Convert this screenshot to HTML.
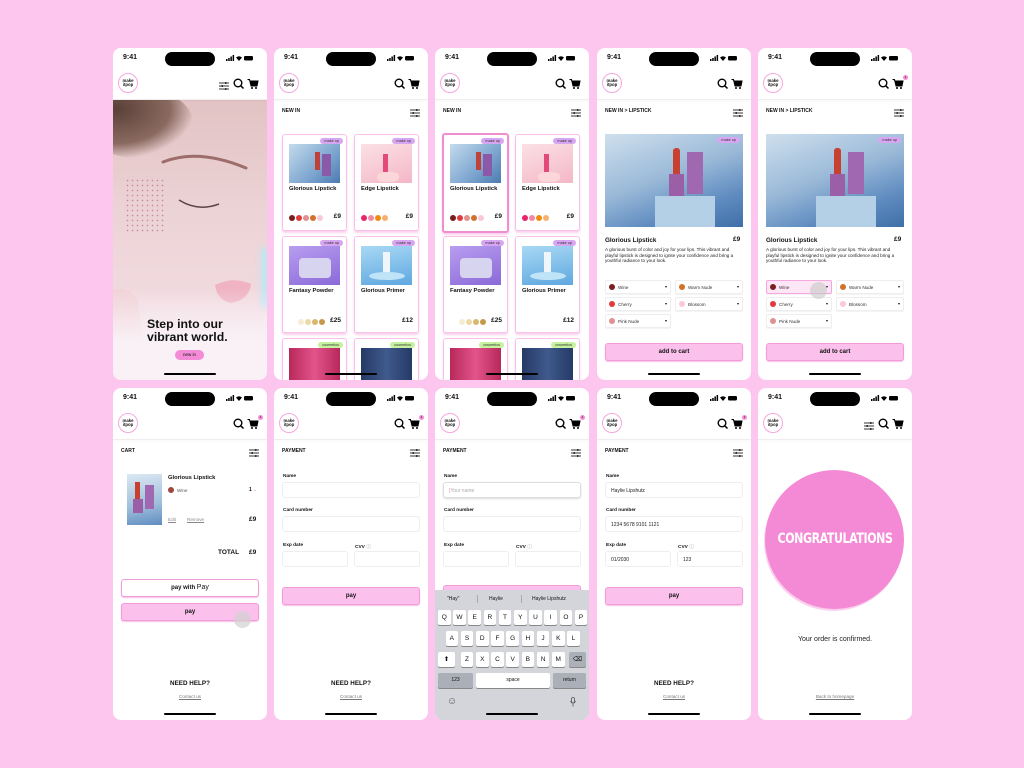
<!DOCTYPE html>
<html><head><meta charset="utf-8"><style>
body{margin:0;width:1024px;height:768px;background:#fdc6ee;position:relative;overflow:hidden;font-family:"Liberation Sans",sans-serif;color:#111}
.ph{position:absolute;width:154px;height:332px;background:#fff;border-radius:8px;overflow:hidden}
.t{position:absolute;white-space:nowrap}
.di{position:absolute;left:52px;top:4px;width:50px;height:14px;background:#000;border-radius:7px}
.tm{position:absolute;left:10px;top:6px;font-size:7px;font-weight:bold}
.sig{position:absolute;left:113px;top:7px}
.logo{position:absolute;left:5px;top:25px;width:20px;height:20px;border:1px solid #f6a7de;border-radius:50%;font-size:4.3px;font-weight:bold;line-height:4.5px;text-align:center;box-sizing:border-box;display:flex;align-items:center;justify-content:center;background:#fff}
.hl{position:absolute;left:0;top:51px;width:154px;height:1px;background:#eee;box-shadow:0 1px 2px rgba(0,0,0,.05)}
.ic{position:absolute;top:30px}
.home{position:absolute;left:51px;top:325px;width:52px;height:2px;background:#000;border-radius:1px}
.lab{position:absolute;left:8px;top:60px;font-size:5px;font-weight:bold}
.flt{position:absolute;left:136px;top:60px}
.card{position:absolute;width:63px;background:#fff;border:1.5px solid #f9c0ea;border-radius:3px;box-shadow:0 2px 2px rgba(240,120,200,.35);overflow:hidden}
.tag{position:absolute;right:3px;top:3px;background:#d8a5f2;border-radius:4px;font-size:3.8px;padding:1px 4px;color:#333}
.img{position:absolute;left:6px;top:9px;width:51px;height:39px}
.ct{position:absolute;left:6px;top:51px;font-size:5.8px;font-weight:bold}
.sw{position:absolute;width:6px;height:6px;border-radius:50%}
.pr{position:absolute;right:5px;font-size:6.5px;font-weight:bold}
.sel{position:absolute;height:12px;border:1px solid #eee;border-radius:2px;background:#fff;box-shadow:0 1px 1px rgba(0,0,0,.05)}
.sel i{position:absolute;left:3px;top:3px;width:6px;height:6px;border-radius:50%}
.sel span{position:absolute;left:12px;top:3.5px;font-size:4.6px;color:#333}
.sel b{position:absolute;right:3px;top:3px;font-size:4px;font-weight:normal}
.btn{position:absolute;left:8px;width:136px;height:16px;background:#fbc1ec;border:1px solid #f29bd8;border-radius:3px;font-size:6px;font-weight:bold;text-align:center;line-height:16px;box-shadow:0 1px 1px rgba(240,100,200,.4)}
.fl{position:absolute;left:9px;font-size:4.8px;font-weight:bold}
.in{position:absolute;height:16px;border:1px solid #eee;border-radius:3px;background:#fff;font-size:5px;line-height:16px;padding-left:5px;box-sizing:border-box;color:#222}
.help{position:absolute;left:0;width:154px;text-align:center}
.k{position:absolute;width:12.5px;height:15px;background:#fff;border-radius:2px;box-shadow:0 1px 0 #888;font-size:6.5px;text-align:center;line-height:15px}
.kd{background:#abafb8}
.badge{position:absolute;left:145px;top:27px;width:5px;height:5px;border-radius:50%;background:#f48bd6;font-size:3px;color:#000;text-align:center;line-height:5px}
</style></head><body>

<svg width="0" height="0" style="position:absolute">
<defs>
<g id="srch"><circle cx="5" cy="5" r="3.8" fill="none" stroke="#000" stroke-width="1.4"/><line x1="7.8" y1="7.8" x2="10.5" y2="10.5" stroke="#000" stroke-width="1.5"/></g>
<g id="cart"><path d="M0.5 1.5H2.5L4 8H10L11 3H3" fill="#000" stroke="#000" stroke-width="1"/><circle cx="5" cy="10" r="1" fill="#000"/><circle cx="9" cy="10" r="1" fill="#000"/></g>
<g id="filt"><path d="M0 2H10M0 5H10M0 8H10" stroke="#333" stroke-width="0.9"/><rect x="6" y="1" width="1.5" height="2" fill="#333"/><rect x="2.5" y="4" width="1.5" height="2" fill="#333"/><rect x="6" y="7" width="1.5" height="2" fill="#333"/></g>
<g id="sg"><rect x="0" y="4" width="1.5" height="2" fill="#000"/><rect x="2.2" y="3" width="1.5" height="3" fill="#000"/><rect x="4.4" y="1.5" width="1.5" height="4.5" fill="#000"/><rect x="6.6" y="0" width="1.5" height="6" fill="#000"/><path d="M10 2.5Q13 0 16 2.5L13 6Z" fill="#000"/><rect x="18" y="1" width="9" height="4.5" rx="1.2" fill="#000"/></g>
</defs></svg>

<!-- ===== PHONE 1 hero ===== -->
<div class="ph" style="left:113px;top:48px">
<div style="position:absolute;left:0;top:52px;width:154px;height:280px;background:linear-gradient(180deg,#e2c3c4 0%,#ecd3d5 40%,#f1dadf 70%,#f7eef3 100%)"></div>
<div style="position:absolute;left:-30px;top:40px;width:110px;height:70px;border-radius:50%;background:radial-gradient(ellipse at 30% 30%,#5a4038,#8a6a60 50%,transparent 72%)"></div>
<div style="position:absolute;left:148px;top:200px;width:10px;height:60px;background:#bfe6f0;filter:blur(3px)"></div>
<svg style="position:absolute;left:0;top:52px" width="154" height="280">
<path d="M50 62Q85 48 133 68" fill="none" stroke="#9d6d6b" stroke-width="3" stroke-linecap="round"/>
<path d="M66 100Q85 112 106 104" fill="none" stroke="#5e4444" stroke-width="1.5"/>
<path d="M102 185Q120 176 138 184Q136 200 118 203Q104 200 102 185Z" fill="#efb3c4"/>
<path d="M0 190Q15 185 25 200L35 280H0Z" fill="#f0d2d6"/>
</svg>
<div style="position:absolute;left:12px;top:130px;width:40px;height:55px;background:radial-gradient(circle,#b76a9b 0.6px,transparent 1px) 0 0/5px 5px;opacity:.7"></div>
<div style="position:absolute;left:0;top:240px;width:154px;height:92px;background:linear-gradient(180deg,transparent,#f9f1f6 60%)"></div>
<div class="t" style="left:34px;top:270px;font-size:12.3px;font-weight:bold;line-height:13px">Step into our<br>vibrant world.</div>
<div class="t" style="left:62px;top:302px;width:29px;height:10px;background:#f48bd6;border-radius:5px;font-size:4.5px;text-align:center;line-height:10px">new in</div>
<div style="position:absolute;left:0;top:0;width:154px;height:52px;background:#fff"></div>
<div class="tm">9:41</div><div class="di"></div><svg class="sig" width="28" height="7"><use href="#sg"/></svg>
<div class="logo">make<br>itpop</div>
<svg class="ic" style="left:106px;top:33px" width="10" height="10"><use href="#filt"/></svg>
<svg class="ic" style="left:120px" width="12" height="12"><use href="#srch"/></svg>
<svg class="ic" style="left:134px" width="12" height="12"><use href="#cart"/></svg>
<div class="hl"></div>
<div class="home"></div>
</div>

<!-- ===== PHONE 2 new in ===== -->
<div class="ph" style="left:274px;top:48px">
<div class="tm">9:41</div><div class="di"></div><svg class="sig" width="28" height="7"><use href="#sg"/></svg>
<div class="logo">make<br>itpop</div>
<svg class="ic" style="left:120px" width="12" height="12"><use href="#srch"/></svg>
<svg class="ic" style="left:134px" width="12" height="12"><use href="#cart"/></svg>
<div class="hl"></div>
<div class="lab">NEW IN</div><svg class="flt" width="10" height="10"><use href="#filt"/></svg>
<div class="card" style="left:8px;top:86px;height:95px"><div class="tag">make up</div><div class="img" style="background:linear-gradient(135deg,#c3dbec,#7ca5cf 60%,#4c7bb0)"><div style="position:absolute;left:26px;top:8px;width:5px;height:18px;background:#c0413c"></div><div style="position:absolute;left:33px;top:10px;width:9px;height:22px;background:#8a5aa8"></div></div><div class="ct">Glorious Lipstick</div>
<div class="sw" style="left:6px;top:80px;background:#7a1f1f"></div><div class="sw" style="left:13px;top:80px;background:#e23b3b"></div><div class="sw" style="left:20px;top:80px;background:#e29090"></div><div class="sw" style="left:27px;top:80px;background:#d27228"></div><div class="sw" style="left:34px;top:80px;background:#f8c8dd"></div><div class="pr" style="top:78px">£9</div></div>
<div class="card" style="left:80px;top:86px;height:95px"><div class="tag">make up</div><div class="img" style="background:linear-gradient(160deg,#fbe0e6,#f4b7c8)"><div style="position:absolute;left:22px;top:10px;width:5px;height:18px;background:#e34a7a"></div><div style="position:absolute;left:16px;top:28px;width:22px;height:10px;background:#fbd7d9;border-radius:40%"></div></div><div class="ct">Edge Lipstick</div>
<div class="sw" style="left:6px;top:80px;background:#e8246b"></div><div class="sw" style="left:13px;top:80px;background:#f08aa8"></div><div class="sw" style="left:20px;top:80px;background:#f28a10"></div><div class="sw" style="left:27px;top:80px;background:#f7b070"></div><div class="pr" style="top:78px">£9</div></div>
<div class="card" style="left:8px;top:188px;height:95px"><div class="tag">make up</div><div class="img" style="background:linear-gradient(160deg,#b89df0,#8a6ad8)"><div style="position:absolute;left:10px;top:12px;width:32px;height:20px;background:#d7d4ef;border-radius:4px"></div></div><div class="ct">Fantasy Powder</div>
<div class="sw" style="left:15px;top:82px;background:#f6ecd6"></div><div class="sw" style="left:22px;top:82px;background:#ecd9a8"></div><div class="sw" style="left:29px;top:82px;background:#d8b76f"></div><div class="sw" style="left:36px;top:82px;background:#c5994a"></div><div class="pr" style="top:80px">£25</div></div>
<div class="card" style="left:80px;top:188px;height:95px"><div class="tag">make up</div><div class="img" style="background:linear-gradient(170deg,#a8d8f4,#5fa8e0)"><div style="position:absolute;left:22px;top:6px;width:7px;height:22px;background:#eef6fb"></div><div style="position:absolute;left:8px;top:26px;width:36px;height:8px;background:#bfe3f7;border-radius:50%"></div></div><div class="ct">Glorious Primer</div><div class="pr" style="top:80px">£12</div></div>
<div class="card" style="left:8px;top:290px;height:60px"><div class="tag" style="background:#c6f29f">cosmetics</div><div class="img" style="background:linear-gradient(90deg,#b8285a,#e2558a,#b8285a);height:50px"></div></div>
<div class="card" style="left:80px;top:290px;height:60px"><div class="tag" style="background:#c6f29f">cosmetics</div><div class="img" style="background:linear-gradient(90deg,#263a66,#3f5a8c,#263a66);height:50px"></div></div>
<div class="home"></div>
</div>

<!-- ===== PHONE 3 selected ===== -->
<div class="ph" style="left:435px;top:48px">
<div class="tm">9:41</div><div class="di"></div><svg class="sig" width="28" height="7"><use href="#sg"/></svg>
<div class="logo">make<br>itpop</div>
<svg class="ic" style="left:120px" width="12" height="12"><use href="#srch"/></svg>
<svg class="ic" style="left:134px" width="12" height="12"><use href="#cart"/></svg>
<div class="hl"></div>
<div class="lab">NEW IN</div><svg class="flt" width="10" height="10"><use href="#filt"/></svg>
<div class="card" style="left:7px;top:85px;height:96px;border:2px solid #f08fd0"><div class="tag">make up</div><div class="img" style="background:linear-gradient(135deg,#c3dbec,#7ca5cf 60%,#4c7bb0)"><div style="position:absolute;left:26px;top:8px;width:5px;height:18px;background:#c0413c"></div><div style="position:absolute;left:33px;top:10px;width:9px;height:22px;background:#8a5aa8"></div></div><div class="ct">Glorious Lipstick</div>
<div class="sw" style="left:6px;top:80px;background:#7a1f1f"></div><div class="sw" style="left:13px;top:80px;background:#e23b3b"></div><div class="sw" style="left:20px;top:80px;background:#e29090"></div><div class="sw" style="left:27px;top:80px;background:#d27228"></div><div class="sw" style="left:34px;top:80px;background:#f8c8dd"></div><div class="pr" style="top:78px">£9</div></div>
<div class="card" style="left:80px;top:86px;height:95px"><div class="tag">make up</div><div class="img" style="background:linear-gradient(160deg,#fbe0e6,#f4b7c8)"><div style="position:absolute;left:22px;top:10px;width:5px;height:18px;background:#e34a7a"></div><div style="position:absolute;left:16px;top:28px;width:22px;height:10px;background:#fbd7d9;border-radius:40%"></div></div><div class="ct">Edge Lipstick</div>
<div class="sw" style="left:6px;top:80px;background:#e8246b"></div><div class="sw" style="left:13px;top:80px;background:#f08aa8"></div><div class="sw" style="left:20px;top:80px;background:#f28a10"></div><div class="sw" style="left:27px;top:80px;background:#f7b070"></div><div class="pr" style="top:78px">£9</div></div>
<div class="card" style="left:8px;top:188px;height:95px"><div class="tag">make up</div><div class="img" style="background:linear-gradient(160deg,#b89df0,#8a6ad8)"><div style="position:absolute;left:10px;top:12px;width:32px;height:20px;background:#d7d4ef;border-radius:4px"></div></div><div class="ct">Fantasy Powder</div>
<div class="sw" style="left:15px;top:82px;background:#f6ecd6"></div><div class="sw" style="left:22px;top:82px;background:#ecd9a8"></div><div class="sw" style="left:29px;top:82px;background:#d8b76f"></div><div class="sw" style="left:36px;top:82px;background:#c5994a"></div><div class="pr" style="top:80px">£25</div></div>
<div class="card" style="left:80px;top:188px;height:95px"><div class="tag">make up</div><div class="img" style="background:linear-gradient(170deg,#a8d8f4,#5fa8e0)"><div style="position:absolute;left:22px;top:6px;width:7px;height:22px;background:#eef6fb"></div><div style="position:absolute;left:8px;top:26px;width:36px;height:8px;background:#bfe3f7;border-radius:50%"></div></div><div class="ct">Glorious Primer</div><div class="pr" style="top:80px">£12</div></div>
<div class="card" style="left:8px;top:290px;height:60px"><div class="tag" style="background:#c6f29f">cosmetics</div><div class="img" style="background:linear-gradient(90deg,#b8285a,#e2558a,#b8285a);height:50px"></div></div>
<div class="card" style="left:80px;top:290px;height:60px"><div class="tag" style="background:#c6f29f">cosmetics</div><div class="img" style="background:linear-gradient(90deg,#263a66,#3f5a8c,#263a66);height:50px"></div></div>
<div class="home"></div>
</div>

<!-- ===== PHONE 4 product ===== -->
<div class="ph" style="left:597px;top:48px">
<div class="tm">9:41</div><div class="di"></div><svg class="sig" width="28" height="7"><use href="#sg"/></svg>
<div class="logo">make<br>itpop</div>
<svg class="ic" style="left:120px" width="12" height="12"><use href="#srch"/></svg>
<svg class="ic" style="left:134px" width="12" height="12"><use href="#cart"/></svg>
<div class="hl"></div>
<div class="lab">NEW IN &gt; LIPSTICK</div><svg class="flt" width="10" height="10"><use href="#filt"/></svg>
<div style="position:absolute;left:8px;top:86px;width:138px;height:93px;background:linear-gradient(160deg,#cfe0ee,#9ab9d8 45%,#5f8cc0 75%,#3f6fa8)"><div class="tag">make up</div><div style="position:absolute;left:68px;top:14px;width:7px;height:28px;background:#c8402f;border-radius:3px 3px 0 0"></div><div style="position:absolute;left:64px;top:40px;width:15px;height:25px;background:#9a5fa6"></div><div style="position:absolute;left:82px;top:18px;width:16px;height:42px;background:#a068b0"></div><div style="position:absolute;left:50px;top:62px;width:60px;height:31px;background:#b3d0e6"></div></div>
<div class="t" style="left:8px;top:189px;font-size:6.3px;font-weight:bold">Glorious Lipstick</div><div class="t" style="left:136px;top:188px;font-size:6.5px;font-weight:bold">£9</div>
<div class="t" style="left:8px;top:199px;width:138px;white-space:normal;font-size:4.6px;line-height:5.7px;color:#222">A glorious burst of color and joy for your lips. This vibrant and playful lipstick is designed to ignite your confidence and bring a youthful radiance to your look.</div>
<div class="sel" style="left:8px;top:232px;width:64px"><i style="background:#7a1f1f"></i><span>Wine</span><b>▾</b></div>
<div class="sel" style="left:78px;top:232px;width:66px"><i style="background:#d27228"></i><span>Warm Nude</span><b>▾</b></div>
<div class="sel" style="left:8px;top:249px;width:64px"><i style="background:#e23b3b"></i><span>Cherry</span><b>▾</b></div>
<div class="sel" style="left:78px;top:249px;width:66px"><i style="background:#f8c8dd"></i><span>Blossom</span><b>▾</b></div>
<div class="sel" style="left:8px;top:266px;width:64px"><i style="background:#e29090"></i><span>Pink Nude</span><b>▾</b></div>
<div class="btn" style="top:295px">add to cart</div>
<div class="home"></div>
</div>

<!-- ===== PHONE 5 product selected ===== -->
<div class="ph" style="left:758px;top:48px">
<div class="tm">9:41</div><div class="di"></div><svg class="sig" width="28" height="7"><use href="#sg"/></svg>
<div class="logo">make<br>itpop</div>
<svg class="ic" style="left:120px" width="12" height="12"><use href="#srch"/></svg>
<svg class="ic" style="left:134px" width="12" height="12"><use href="#cart"/></svg>
<div class="badge">1</div>
<div class="hl"></div>
<div class="lab">NEW IN &gt; LIPSTICK</div><svg class="flt" width="10" height="10"><use href="#filt"/></svg>
<div style="position:absolute;left:8px;top:86px;width:138px;height:93px;background:linear-gradient(160deg,#cfe0ee,#9ab9d8 45%,#5f8cc0 75%,#3f6fa8)"><div class="tag">make up</div><div style="position:absolute;left:68px;top:14px;width:7px;height:28px;background:#c8402f;border-radius:3px 3px 0 0"></div><div style="position:absolute;left:64px;top:40px;width:15px;height:25px;background:#9a5fa6"></div><div style="position:absolute;left:82px;top:18px;width:16px;height:42px;background:#a068b0"></div><div style="position:absolute;left:50px;top:62px;width:60px;height:31px;background:#b3d0e6"></div></div>
<div class="t" style="left:8px;top:189px;font-size:6.3px;font-weight:bold">Glorious Lipstick</div><div class="t" style="left:136px;top:188px;font-size:6.5px;font-weight:bold">£9</div>
<div class="t" style="left:8px;top:199px;width:138px;white-space:normal;font-size:4.6px;line-height:5.7px;color:#222">A glorious burst of color and joy for your lips. This vibrant and playful lipstick is designed to ignite your confidence and bring a youthful radiance to your look.</div>
<div class="sel" style="left:8px;top:232px;width:64px;border-color:#f5a6dd;background:#fde6f6"><i style="background:#7a1f1f"></i><span>Wine</span><b>▾</b></div>
<div class="sel" style="left:78px;top:232px;width:66px"><i style="background:#d27228"></i><span>Warm Nude</span><b>▾</b></div>
<div class="sel" style="left:8px;top:249px;width:64px"><i style="background:#e23b3b"></i><span>Cherry</span><b>▾</b></div>
<div class="sel" style="left:78px;top:249px;width:66px"><i style="background:#f8c8dd"></i><span>Blossom</span><b>▾</b></div>
<div class="sel" style="left:8px;top:266px;width:64px"><i style="background:#e29090"></i><span>Pink Nude</span><b>▾</b></div>
<div style="position:absolute;left:52px;top:234px;width:17px;height:17px;border-radius:50%;background:rgba(200,200,200,.6)"></div>
<div class="btn" style="top:295px">add to cart</div>
<div class="home"></div>
</div>

<!-- ===== PHONE 6 cart ===== -->
<div class="ph" style="left:113px;top:388px">
<div class="tm">9:41</div><div class="di"></div><svg class="sig" width="28" height="7"><use href="#sg"/></svg>
<div class="logo">make<br>itpop</div>
<svg class="ic" style="left:120px" width="12" height="12"><use href="#srch"/></svg>
<svg class="ic" style="left:134px" width="12" height="12"><use href="#cart"/></svg>
<div class="badge">1</div>
<div class="hl"></div>
<div class="lab">CART</div><svg class="flt" width="10" height="10"><use href="#filt"/></svg>
<div style="position:absolute;left:14px;top:86px;width:35px;height:51px;background:linear-gradient(170deg,#dbe8f2,#9fbfdc 60%,#5f8cc0)"><div style="position:absolute;left:8px;top:8px;width:5px;height:22px;background:#c8402f"></div><div style="position:absolute;left:6px;top:25px;width:10px;height:14px;background:#9a5fa6"></div><div style="position:absolute;left:18px;top:11px;width:9px;height:24px;background:#a068b0"></div></div>
<div class="t" style="left:55px;top:87px;font-size:5.8px;font-weight:bold">Glorious Lipstick</div>
<div style="position:absolute;left:55px;top:99px;width:6px;height:6px;border-radius:50%;background:#a0463f"></div>
<div class="t" style="left:64px;top:99.5px;font-size:4.6px;color:#555">Wine</div>
<div class="t" style="left:136px;top:99px;font-size:5px;font-weight:bold">1 <span style="color:#e47ac8;font-weight:normal">⌄</span></div>
<div class="t" style="left:55px;top:129px;font-size:4.6px;color:#888;text-decoration:underline">Edit</div>
<div class="t" style="left:74px;top:129px;font-size:4.6px;color:#888;text-decoration:underline">Remove</div>
<div class="t" style="left:136px;top:128px;font-size:6.5px;font-weight:bold">£9</div>
<div class="t" style="left:105px;top:161px;font-size:6.5px;font-weight:bold">TOTAL</div>
<div class="t" style="left:136px;top:161px;font-size:6.5px;font-weight:bold">£9</div>
<div class="btn" style="top:191px;background:#fff">pay with <span style="font-weight:normal;font-size:7px"> Pay</span></div>
<div class="btn" style="top:215px">pay</div>
<div style="position:absolute;left:121px;top:223px;width:17px;height:17px;border-radius:50%;background:rgba(210,210,210,.7)"></div>
<div class="help t" style="top:292px;font-size:6.3px;font-weight:bold">NEED HELP?</div>
<div class="help t" style="top:306px;font-size:4.6px;color:#777;text-decoration:underline">Contact us</div>
<div class="home"></div>
</div>

<!-- ===== PHONE 7 payment ===== -->
<div class="ph" style="left:274px;top:388px">
<div class="tm">9:41</div><div class="di"></div><svg class="sig" width="28" height="7"><use href="#sg"/></svg>
<div class="logo">make<br>itpop</div>
<svg class="ic" style="left:120px" width="12" height="12"><use href="#srch"/></svg>
<svg class="ic" style="left:134px" width="12" height="12"><use href="#cart"/></svg>
<div class="badge">1</div>
<div class="hl"></div>
<div class="lab">PAYMENT</div><svg class="flt" width="10" height="10"><use href="#filt"/></svg>
<div class="fl" style="top:86px">Name</div><div class="in" style="left:8px;top:94px;width:138px"></div>
<div class="fl" style="top:120px">Card number</div><div class="in" style="left:8px;top:128px;width:138px"></div>
<div class="fl" style="top:155px">Exp date</div><div class="fl" style="left:81px;top:155px">CVV <span style="color:#ccc">ⓘ</span></div>
<div class="in" style="left:8px;top:163px;width:66px"></div><div class="in" style="left:80px;top:163px;width:66px"></div>
<div class="btn" style="top:199px">pay</div>
<div class="help t" style="top:292px;font-size:6.3px;font-weight:bold">NEED HELP?</div>
<div class="help t" style="top:306px;font-size:4.6px;color:#777;text-decoration:underline">Contact us</div>
<div class="home"></div>
</div>

<!-- ===== PHONE 8 keyboard ===== -->
<div class="ph" style="left:435px;top:388px">
<div class="tm">9:41</div><div class="di"></div><svg class="sig" width="28" height="7"><use href="#sg"/></svg>
<div class="logo">make<br>itpop</div>
<svg class="ic" style="left:120px" width="12" height="12"><use href="#srch"/></svg>
<svg class="ic" style="left:134px" width="12" height="12"><use href="#cart"/></svg>
<div class="badge">1</div>
<div class="hl"></div>
<div class="lab">PAYMENT</div><svg class="flt" width="10" height="10"><use href="#filt"/></svg>
<div class="fl" style="top:86px">Name</div><div class="in" style="left:8px;top:94px;width:138px;border-color:#ddd;box-shadow:0 1px 2px rgba(0,0,0,.15);color:#aaa"><span style="color:#e47ac8">|</span>Your name</div>
<div class="fl" style="top:120px">Card number</div><div class="in" style="left:8px;top:128px;width:138px"></div>
<div class="fl" style="top:155px">Exp date</div><div class="fl" style="left:81px;top:155px">CVV <span style="color:#ccc">ⓘ</span></div>
<div class="in" style="left:8px;top:163px;width:66px"></div><div class="in" style="left:80px;top:163px;width:66px"></div>
<div class="btn" style="top:197px"></div>
<div style="position:absolute;left:0;top:202px;width:154px;height:130px;background:#d3d5db"></div>
<div class="t" style="left:12px;top:208px;font-size:5px">"Hay"</div><div class="t" style="left:54px;top:208px;font-size:5px">Haylie</div><div class="t" style="left:97px;top:208px;font-size:5px">Haylie Lipshutz</div>
<div style="position:absolute;left:42px;top:207px;width:1px;height:8px;background:#aaa"></div><div style="position:absolute;left:86px;top:207px;width:1px;height:8px;background:#aaa"></div>
<div class="k" style="left:3px;top:222px">Q</div><div class="k" style="left:18.2px;top:222px">W</div><div class="k" style="left:33.4px;top:222px">E</div><div class="k" style="left:48.6px;top:222px">R</div><div class="k" style="left:63.8px;top:222px">T</div><div class="k" style="left:79px;top:222px">Y</div><div class="k" style="left:94.2px;top:222px">U</div><div class="k" style="left:109.4px;top:222px">I</div><div class="k" style="left:124.6px;top:222px">O</div><div class="k" style="left:139.8px;top:222px">P</div>
<div class="k" style="left:10.6px;top:243px">A</div><div class="k" style="left:25.8px;top:243px">S</div><div class="k" style="left:41px;top:243px">D</div><div class="k" style="left:56.2px;top:243px">F</div><div class="k" style="left:71.4px;top:243px">G</div><div class="k" style="left:86.6px;top:243px">H</div><div class="k" style="left:101.8px;top:243px">J</div><div class="k" style="left:117px;top:243px">K</div><div class="k" style="left:132.2px;top:243px">L</div>
<div class="k" style="left:3px;top:264px;width:17px">⬆</div><div class="k" style="left:25.8px;top:264px">Z</div><div class="k" style="left:41px;top:264px">X</div><div class="k" style="left:56.2px;top:264px">C</div><div class="k" style="left:71.4px;top:264px">V</div><div class="k" style="left:86.6px;top:264px">B</div><div class="k" style="left:101.8px;top:264px">N</div><div class="k" style="left:117px;top:264px">M</div><div class="k kd" style="left:134px;top:264px;width:17px">⌫</div>
<div class="k kd" style="left:3px;top:285px;width:35px;font-size:5px">123</div><div class="k" style="left:41px;top:285px;width:74px;font-size:5px">space</div><div class="k kd" style="left:118px;top:285px;width:33px;font-size:5px">return</div>
<div class="t" style="left:12px;top:308px;font-size:10px;color:#555">☺</div>
<svg style="position:absolute;left:135px;top:309px" width="6" height="10"><rect x="1.5" y="0.5" width="3" height="5.5" rx="1.5" fill="none" stroke="#555" stroke-width="0.8"/><path d="M0.5 4Q3 8.5 5.5 4M3 7V9.5" fill="none" stroke="#555" stroke-width="0.8"/></svg>
<div class="home"></div>
</div>

<!-- ===== PHONE 9 filled ===== -->
<div class="ph" style="left:597px;top:388px">
<div class="tm">9:41</div><div class="di"></div><svg class="sig" width="28" height="7"><use href="#sg"/></svg>
<div class="logo">make<br>itpop</div>
<svg class="ic" style="left:120px" width="12" height="12"><use href="#srch"/></svg>
<svg class="ic" style="left:134px" width="12" height="12"><use href="#cart"/></svg>
<div class="badge">1</div>
<div class="hl"></div>
<div class="lab">PAYMENT</div><svg class="flt" width="10" height="10"><use href="#filt"/></svg>
<div class="fl" style="top:86px">Name</div><div class="in" style="left:8px;top:94px;width:138px">Haylie Lipshutz</div>
<div class="fl" style="top:120px">Card number</div><div class="in" style="left:8px;top:128px;width:138px">1234 5678 9101 1121</div>
<div class="fl" style="top:155px">Exp date</div><div class="fl" style="left:81px;top:155px">CVV <span style="color:#ccc">ⓘ</span></div>
<div class="in" style="left:8px;top:163px;width:66px">01/2030</div><div class="in" style="left:80px;top:163px;width:66px">123</div>
<div class="btn" style="top:199px">pay</div>
<div class="help t" style="top:292px;font-size:6.3px;font-weight:bold">NEED HELP?</div>
<div class="help t" style="top:306px;font-size:4.6px;color:#777;text-decoration:underline">Contact us</div>
<div class="home"></div>
</div>

<!-- ===== PHONE 10 congrats ===== -->
<div class="ph" style="left:758px;top:388px">
<div class="tm">9:41</div><div class="di"></div><svg class="sig" width="28" height="7"><use href="#sg"/></svg>
<div class="logo">make<br>itpop</div>
<svg class="ic" style="left:106px;top:33px" width="10" height="10"><use href="#filt"/></svg>
<svg class="ic" style="left:120px" width="12" height="12"><use href="#srch"/></svg>
<svg class="ic" style="left:134px" width="12" height="12"><use href="#cart"/></svg>
<div class="hl"></div>
<div style="position:absolute;left:7px;top:82px;width:139px;height:139px;border-radius:50%;background:#f48ad6;box-shadow:-1px 2px 0 #fbd0ee"></div>
<div class="t" style="left:0;width:154px;text-align:center;top:144px;font-family:'DejaVu Sans',sans-serif;font-weight:bold;font-size:11px;color:#fff;letter-spacing:-0.4px;transform:scaleY(1.25)">CONGRATULATIONS</div>
<div class="help t" style="top:248px;font-size:7px;color:#222">Your order is confirmed.</div>
<div class="help t" style="top:306px;font-size:4.6px;color:#777;text-decoration:underline">Back to homepage</div>
<div class="home"></div>
</div>

</body></html>
